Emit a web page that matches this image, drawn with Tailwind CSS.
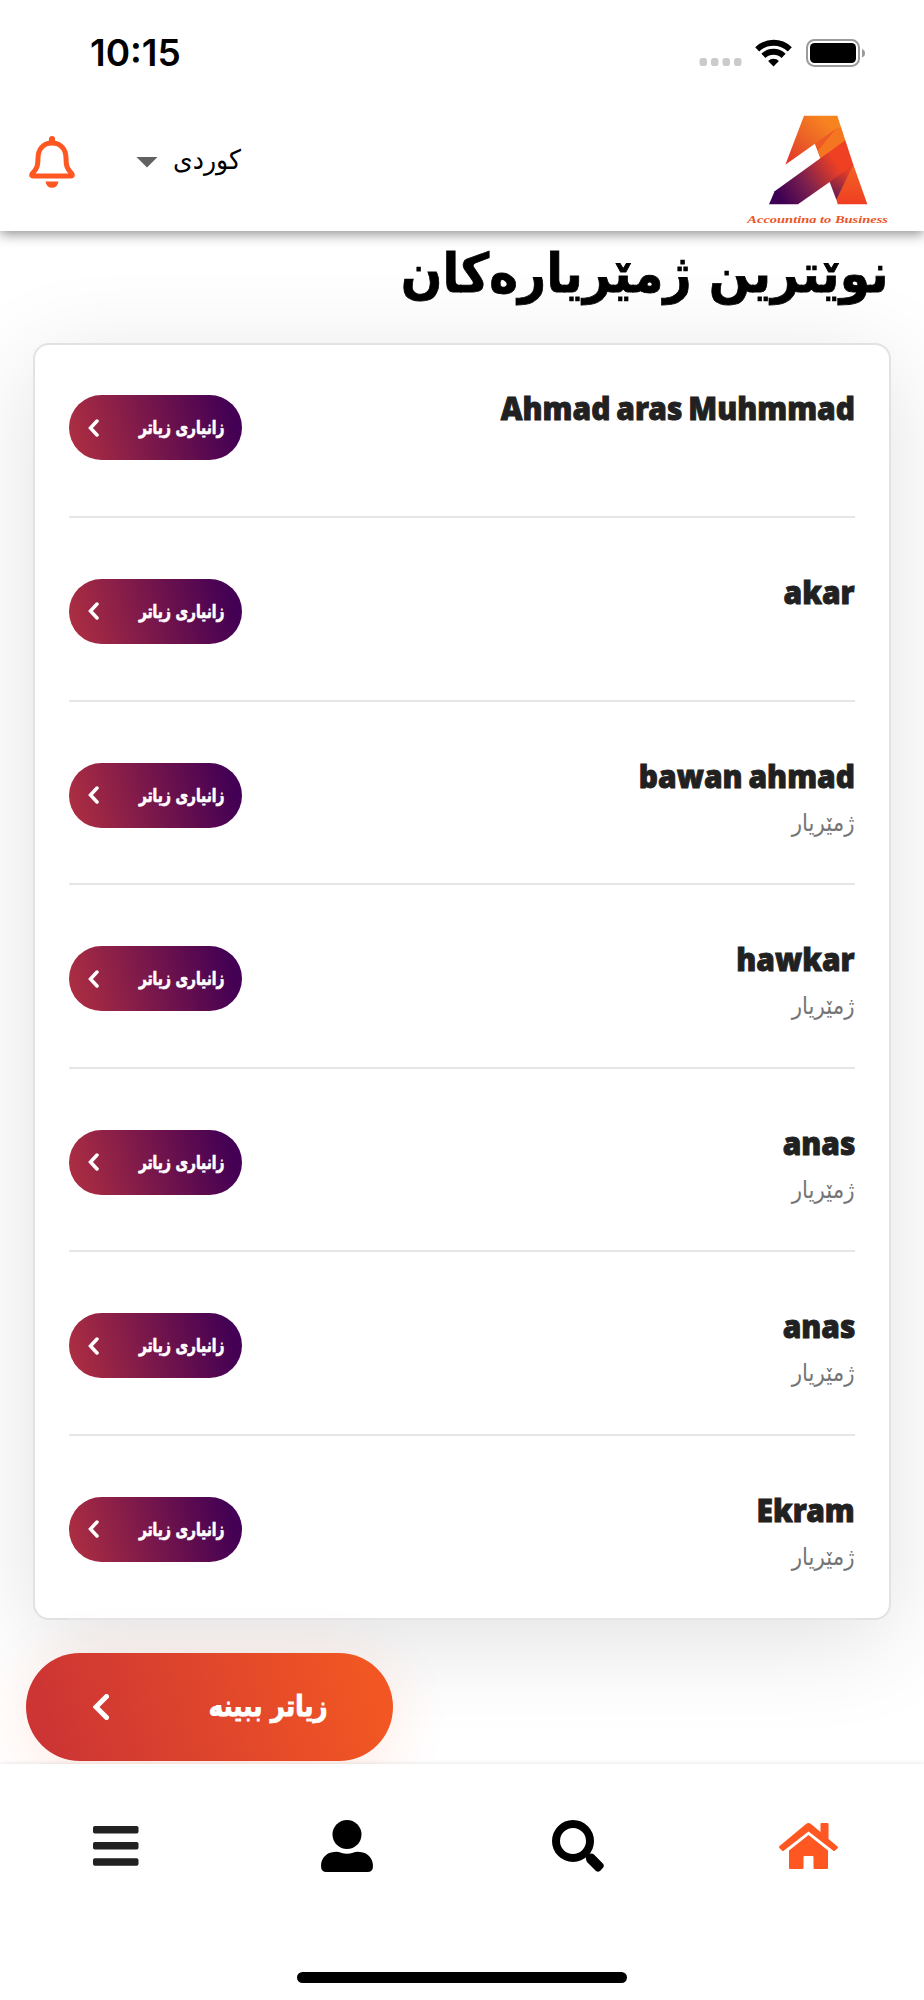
<!doctype html>
<html lang="ckb">
  <head>
    <meta charset="UTF-8" />
    <meta name="viewport" content="width=device-width, initial-scale=1.0" />
    <title>Accounting to Business</title>
    <script src="https://cdn.jsdelivr.net/npm/@tailwindcss/browser@4"></script>
  </head>
  <body class="bg-white font-['DejaVu_Sans',sans-serif] text-black">
    <div class="flex h-[2000px] w-[924px] flex-col overflow-hidden">
      <header class="relative z-10 flex h-[231px] shrink-0 flex-col bg-white shadow-[0_3px_12px_rgba(0,0,0,0.45)]">
        <div class="flex h-[106px] items-center justify-between pr-[58px] pl-[90px]">
          <span class="font-['Inter',sans-serif] text-[37px] font-semibold">10:15</span>
          <div class="flex items-center">
            <svg class="mr-[13px]" width="43" height="28" viewBox="0 0 43 28" fill="#cbcbcb">
              <rect x="0.5" y="19" width="7.5" height="8" rx="2.8" />
              <rect x="12" y="19" width="7.5" height="8" rx="2.8" />
              <rect x="23.5" y="19" width="7.5" height="8" rx="2.8" />
              <rect x="35" y="19" width="7.5" height="8" rx="2.8" />
            </svg>
            <svg class="mr-[14px]" width="37" height="28" viewBox="0 0 37 28">
              <g fill="none" stroke="#000" stroke-width="5.8">
                <path d="M2.2 10.300a23.6 23.6 0 0 1 32.6 0" />
                <path d="M8.4 16.800a14.6 14.6 0 0 1 20.2 0" />
              </g>
              <path d="M18.5 27.500l-5.400-5.500a7.8 7.8 0 0 1 10.800 0z" />
            </svg>
            <svg width="60" height="28" viewBox="0 0 60 28">
              <rect x="1" y="1" width="52" height="26" rx="7.5" fill="none" stroke="#9b9b9b" stroke-width="2" />
              <rect x="4" y="4" width="46" height="20" rx="4.5" />
              <path d="M56 10q3 1 3 4.200t-3 4.200z" fill="#9b9b9b" />
            </svg>
          </div>
        </div>
        <div class="flex flex-1 items-start justify-between pr-[33px] pl-[29px]">
          <div class="flex items-center pt-[29px]">
            <svg width="46" height="54" viewBox="0 0 46 54">
              <path d="M23 8C14 8 9 14.500 9 23c0 8-1 10.500-5.600 15.500C2 40.500 3 41 4 41H42c1 0 2-.5.600-2.500C38 33.500 37 31 37 23 37 14.500 32 8 23 8z" fill="none" stroke="#ff5722" stroke-width="5" stroke-linejoin="round" />
              <path d="M20 9V4a3 3 0 0 1 6 0v5zM16.500 46.500h13q-1 6.300-6.500 6.300t-6.500-6.300z" fill="#ff5722" />
            </svg>
            <svg class="ml-[61px]" width="22" height="11" viewBox="0 0 22 11"><path d="M.5 0h21L11 10.500z" fill="#616161" /></svg>
            <span dir="rtl" class="ml-4 w-[67px] origin-right scale-x-[0.93] pb-[3px] text-[27px] whitespace-nowrap">کوردی</span>
          </div>
          <svg class="mt-[7px]" width="147" height="110" viewBox="60 40 441 330">
            <defs>
              <linearGradient id="top" x1="200" y1="190" x2="310" y2="70" gradientUnits="userSpaceOnUse">
                <stop stop-color="#e23a2a" />
                <stop offset=".5" stop-color="#eb6126" />
                <stop offset="1" stop-color="#f78320" />
              </linearGradient>
              <linearGradient id="bar" x1="165" y1="290" x2="335" y2="185" gradientUnits="userSpaceOnUse">
                <stop stop-color="#3d0054" />
                <stop offset=".45" stop-color="#7c204e" />
                <stop offset="1" stop-color="#ef4023" />
              </linearGradient>
              <linearGradient id="fold" x1="330" y1="280" x2="370" y2="215" gradientUnits="userSpaceOnUse">
                <stop stop-color="#74204d" />
                <stop offset="1" stop-color="#e63d26" />
              </linearGradient>
              <linearGradient id="leg" x1="385" y1="195" x2="385" y2="314" gradientUnits="userSpaceOnUse">
                <stop stop-color="#f26522" />
                <stop offset="1" stop-color="#ef3e23" />
              </linearGradient>
            </defs>
            <path d="M240 48H340L364 124 290 178 273 132 184 195z" fill="url(#top)" />
            <path d="M273 132L338 86 281 154z" fill="#ee5a26" />
            <path d="M281 154L338 86 351 83 364 124 290 178z" fill="#f47621" />
            <path d="M387 192L430 314H341L337 298z" fill="url(#leg)" />
            <path d="M310 240L370 190 388 195 337 300 317 247z" fill="url(#fold)" />
            <path d="M364 122L388 195 317 247 222 314H135L152 275z" fill="url(#bar)" />
            <text x="70" y="370" textLength="422" lengthAdjust="spacingAndGlyphs" font-family="Liberation Serif" font-style="italic" font-weight="700" font-size="34" fill="#ea5427">Accounting to Business</text>
          </svg>
        </div>
      </header>

      <main class="flex flex-1 flex-col">
        <h1 dir="rtl" class="h-[112px] origin-right scale-x-[0.905] pt-[8px] pr-[39px] text-[54px] leading-[70px] font-bold whitespace-nowrap [-webkit-text-stroke:0.8px_black]">نوێترین ژمێریارەکان</h1>
        <section class="mx-[33px] flex h-[1277px] shrink-0 flex-col justify-end rounded-2xl border-2 border-[#e2e2e2] bg-white px-[34px] shadow-[0_20px_100px_rgba(0,0,0,0.12)]">
          <div id="accountants" class="-mb-[1.5px] flex flex-col"></div>
        </section>
        <a href="#" class="mt-[33px] ml-[26px] flex h-[108px] w-[367px] shrink-0 items-center justify-between rounded-full bg-[linear-gradient(75deg,#cd3534_8%,#f15623_92%)] pr-[66px] pl-[67px] text-white shadow-[0_10px_60px_rgba(255,87,34,0.14)]">
          <svg width="16" height="26" viewBox="0 0 16 26"><path d="M13.500 2.500L3 13l10.500 10.500" fill="none" stroke="#fff" stroke-width="5" stroke-linecap="round" /></svg>
          <span dir="rtl" class="origin-right scale-x-[0.84] text-[29px] font-bold whitespace-nowrap [-webkit-text-stroke:1px_white]">زیاتر ببینە</span>
        </a>
      </main>

      <nav class="relative z-10 flex h-[236px] shrink-0 flex-col bg-white shadow-[0_0_5px_rgba(0,0,0,0.12)]">
        <div class="grid h-[163px] grid-cols-4 place-items-center">
          <svg width="46" height="40" viewBox="0 0 46 40" fill="#212121">
            <rect width="45.500" height="7.500" rx="1.800" />
            <rect y="16" width="45.500" height="7.500" rx="1.800" />
            <rect y="32.300" width="45.500" height="7.500" rx="1.800" />
          </svg>
          <svg width="52" height="52" viewBox="0 0 52 52">
            <circle cx="26" cy="14.500" r="14.500" />
            <path d="M13 32q4-.5 7 .7 6 2 12 0 3-1.200 7-.7c8 .5 13 6.500 13 14q0 6-5.500 6h-41Q0 52 0 46C0 38.500 5 32.500 13 32z" />
          </svg>
          <svg width="52" height="52" viewBox="0 0 52 52">
            <circle cx="21" cy="21" r="17" fill="none" stroke="#000" stroke-width="8" />
            <path d="M34 37.500q0-3.500 5-4 2 0 3 1l8.800 9q2 2.200 0 4.500l-2.800 3q-2 1.500-4 0l-9-9q-1.200-1.500-1-4.500z" />
          </svg>
          <svg width="59" height="46" viewBox="0 0 59 46" fill="#ff5722">
            <path d="M27 1q2.500-1.800 5 0l9.500 8V1q0-1 1-1h6q1 0 1 1v15l8.800 7.300q1 1 .3 2l-2.600 2.300q-1 1-2 0L29.500 8.500 5 27.600q-1 1-2 0L.4 25q-.8-1 .2-2z" />
            <path d="M29.500 12L49 27.500V45q0 1-1 1H35.500q-1 0-1-1V34q0-1-1-1h-8q-1 0-1 1v11q0 1-1 1H11q-1 0-1-1V27.500z" />
          </svg>
        </div>
        <div class="mx-auto mt-[45px] h-[11px] w-[330px] rounded-full bg-black"></div>
      </nav>
    </div>

    <script>
      const accountants = [
        { name: 'Ahmad aras Muhmmad', job: '' },
        { name: 'akar', job: '' },
        { name: 'bawan ahmad', job: 'ژمێریار' },
        { name: 'hawkar', job: 'ژمێریار' },
        { name: 'anas', job: 'ژمێریار' },
        { name: 'anas', job: 'ژمێریار' },
        { name: 'Ekram', job: 'ژمێریار' },
      ]

      document.getElementById('accountants').innerHTML = accountants.map(({ name, job }) => `
        <div class="flex h-[183.600px] shrink-0 items-start justify-between border-b-2 border-[#e6e6e6] pt-[61px]">
          <a href="#" class="flex h-[65px] w-[173px] items-center justify-between rounded-full bg-[linear-gradient(75deg,#ab2d42_5%,#430054_92%)] pr-[18px] pl-[19px] text-white">
            <svg width="11" height="18" viewBox="0 0 11 18"><path d="M9 2L2.500 9 9 16" fill="none" stroke="#fff" stroke-width="3.500" stroke-linecap="round" /></svg>
            <span dir="rtl" class="origin-right scale-x-[0.76] text-[18px] font-bold whitespace-nowrap [-webkit-text-stroke:0.7px_white]">زانیاری زیاتر</span>
          </a>
          <div class="flex flex-col items-end">
            <h2 class="-mt-[6px] origin-right scale-x-[0.965] font-['Noto_Sans',sans-serif] text-[31px] leading-[38px] font-black text-[#212121] [-webkit-text-stroke:0.9px_#212121] [word-spacing:-2px]">${name}</h2>
            <p dir="rtl" class="mt-[12px] origin-right scale-x-[0.89] text-[24px] leading-[32px] text-[#757575]">${job}</p>
          </div>
        </div>`).join('')
    </script>
  </body>
</html>
